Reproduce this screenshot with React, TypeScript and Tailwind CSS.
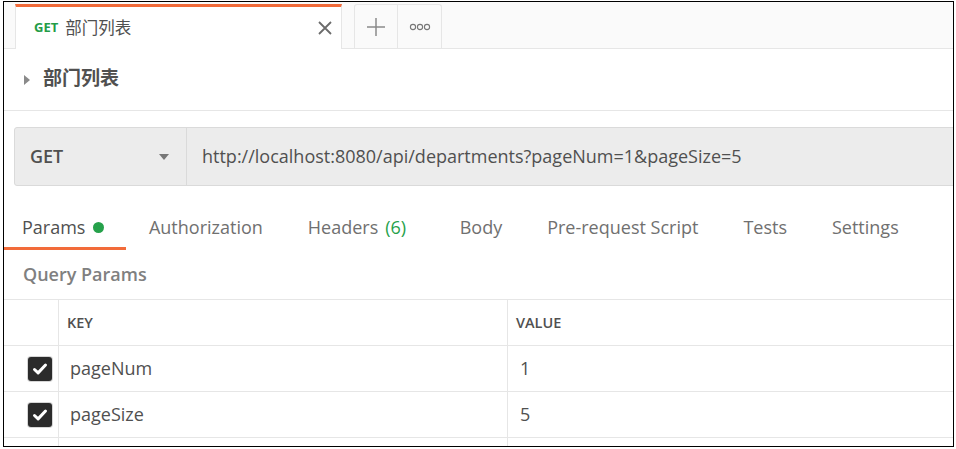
import React from 'react';

const font = { fontFamily: '"Open Sans", "Noto Sans CJK SC", sans-serif' };

const tabs = ['Authorization', 'Headers', 'Body', 'Pre-request Script', 'Tests', 'Settings'];

const Check: React.FC = () => (
  <div className="w-[24px] h-[24px] rounded-[3px] bg-[#2b2b2b] ring-1 ring-[#d6d6d6] flex items-center justify-center">
    <svg width="18" height="18" viewBox="0 0 18 18">
      <path d="M3.5 9.5l3.6 3.4L14.5 5" fill="none" stroke="#fff" strokeWidth="3" strokeLinecap="round" strokeLinejoin="round" />
    </svg>
  </div>
);

export default function App() {
  return (
    <div className="w-[956px] h-[449px] bg-white pt-[1px] pl-[3px]" style={font}>
      <div className="w-[951px] h-[446px] border border-black overflow-hidden flex flex-col">
        {/* request tabs */}
        <div className="h-[47px] shrink-0 bg-[#fafafa] border-b border-[#e6e6e6] flex items-end pl-[11px]">
          <div className="w-[327px] h-[45px] -mb-[1px] bg-white border-t-[3px] border-t-[#f26b3a] border-x border-x-[#e6e6e6] flex items-center pl-[18px] pr-[8px]">
            <span className="text-[13px] font-bold text-[#249c47]">GET</span>
            <span className="ml-[7px] text-[16.5px] text-[#505050]">部门列表</span>
            <svg className="ml-auto" width="16" height="16" viewBox="0 0 16 16">
              <path d="M2 2l12 12M14 2L2 14" stroke="#6b6b6b" strokeWidth="1.8" />
            </svg>
          </div>
          <div className="ml-[12px] flex h-[44px]">
            <div className="w-[44px] border border-b-0 border-[#e6e6e6] rounded-tl-[3px] flex items-center justify-center">
              <svg width="20" height="20" viewBox="0 0 20 20">
                <path d="M10 1v18M1 10h18" stroke="#8a8a8a" strokeWidth="1.5" />
              </svg>
            </div>
            <div className="w-[44px] border border-l-0 border-b-0 border-[#e6e6e6] rounded-tr-[3px] flex items-center justify-center">
              <svg width="22" height="8" viewBox="0 0 22 8">
                <circle cx="4" cy="4" r="2.6" fill="none" stroke="#777" strokeWidth="1.1" />
                <circle cx="11" cy="4" r="2.6" fill="none" stroke="#777" strokeWidth="1.1" />
                <circle cx="18" cy="4" r="2.6" fill="none" stroke="#777" strokeWidth="1.1" />
              </svg>
            </div>
          </div>
        </div>

        {/* title */}
        <div className="h-[62px] shrink-0 border-b border-[#e6e6e6] flex items-center pl-[19px]">
          <svg width="8" height="10" viewBox="0 0 8 10">
            <path d="M1 0l6 5-6 5z" fill="#8a8a8a" />
          </svg>
          <span className="ml-[12px] text-[19px] font-bold text-[#505050] -mt-[2px]">部门列表</span>
        </div>

        {/* url bar */}
        <div className="mt-[16px] ml-[10px] w-[980px] h-[59px] shrink-0 bg-[#ececec] border border-[#dadada] rounded-[3px] flex">
          <div className="w-[172px] border-r border-[#dadada] flex items-center pl-[15px] pr-[17px]">
            <span className="text-[18px] font-semibold text-[#505050]">GET</span>
            <svg className="ml-auto" width="10" height="6" viewBox="0 0 10 6">
              <path d="M0 0h10L5 6z" fill="#777" />
            </svg>
          </div>
          <div className="flex items-center pl-[15px] text-[18px] text-[#505050]">
            http://localhost:8080/api/departments?pageNum=1&amp;pageSize=5
          </div>
        </div>

        {/* section tabs */}
        <div className="mt-[24px] h-[40px] shrink-0 flex items-stretch text-[18px] text-[#707070]">
          <div className="pl-[18px] pr-[22px] flex items-center border-b-[3px] border-[#f26b3a] pb-[2px]">
            <span className="text-[#505050]">Params</span>
            <span className="ml-[8px] w-[11px] h-[11px] rounded-full bg-[#26a14b]" />
          </div>
          {tabs.map((t) => (
            <div key={t} className={t === 'Headers' ? 'pl-[22.5px] pr-[31px] flex items-center pb-[5px]' : 'px-[22.5px] flex items-center pb-[5px]'}>
              {t}
              {t === 'Headers' && <span className="ml-[7px] text-[#26a14b]">(6)</span>}
            </div>
          ))}
        </div>

        <div className="h-[49px] shrink-0 flex items-center pl-[19px] text-[18px] font-semibold text-[#808080]">
          Query Params
        </div>

        {/* table */}
        <div className="border-t border-[#e6e6e6]">
          <div className="h-[46px] flex border-b border-[#e6e6e6]">
            <div className="w-[55px] border-r border-[#e6e6e6]" />
            <div className="w-[449px] border-r border-[#e6e6e6] flex items-center pl-[8px] text-[14.5px] font-semibold text-[#505050]">KEY</div>
            <div className="flex-1 flex items-center pl-[8px] text-[14.5px] font-semibold text-[#505050]">VALUE</div>
          </div>
          {[
            ['pageNum', '1'],
            ['pageSize', '5'],
          ].map(([k, v]) => (
            <div key={k} className="h-[46px] flex border-b border-[#e6e6e6] text-[18px] text-[#505050]">
              <div className="w-[55px] border-r border-[#e6e6e6] flex items-center pl-[24px]">
                <Check />
              </div>
              <div className="w-[449px] border-r border-[#e6e6e6] flex items-center pl-[11px]">{k}</div>
              <div className="flex-1 flex items-center pl-[12px]">{v}</div>
            </div>
          ))}
          <div className="h-[46px] flex">
            <div className="w-[55px] border-r border-[#e6e6e6]" />
            <div className="w-[449px] border-r border-[#e6e6e6]" />
          </div>
        </div>
      </div>
    </div>
  );
}
